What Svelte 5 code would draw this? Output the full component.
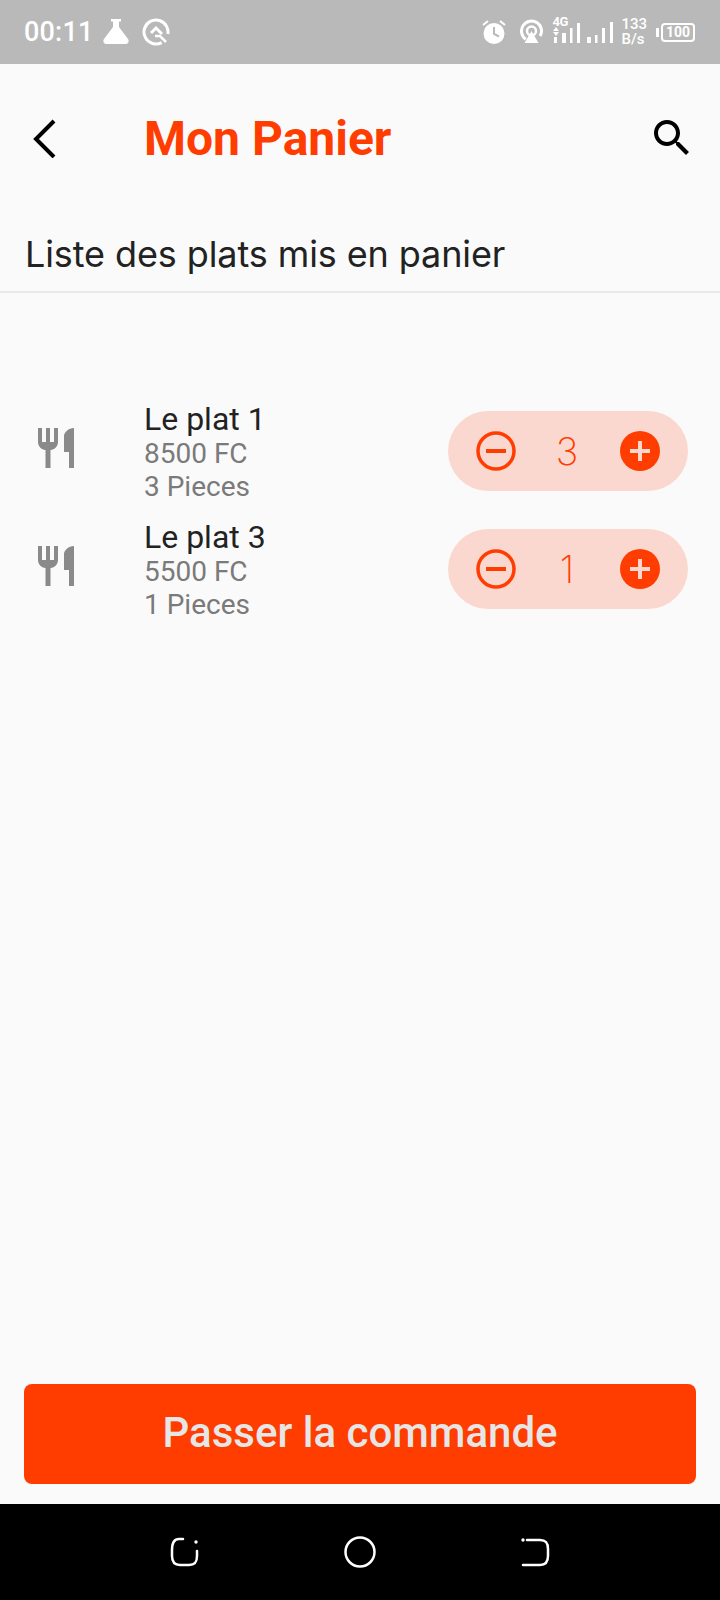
<script lang="ts">
  interface Plat {
    name: string;
    price: string;
    qty: number;
  }

  const plats: Plat[] = [
    { name: "Le plat 1", price: "8500 FC", qty: 3 },
    { name: "Le plat 3", price: "5500 FC", qty: 1 },
  ];
</script>

<div class="screen">
  <div class="statusbar">
    <span class="time">00:11</span>
    <svg class="ic-flask" width="26" height="26" viewBox="0 0 26 26">
      <path d="M8 0h10v2.500h-2V8l9 12c1.500 2.500 0 5-2 5H3c-2 0-3.500-2.500-2-5l9-12V2.500H8z" fill="#fff"/>
    </svg>
    <svg class="ic-q" width="28" height="28" viewBox="0 0 28 28">
      <circle cx="14" cy="14" r="12" fill="none" stroke="#fff" stroke-width="3" stroke-dasharray="64 12" transform="rotate(62 14 14)"/>
      <path d="M9 15l5-5 6 6" fill="none" stroke="#fff" stroke-width="3"/>
      <path d="M13 18h5l6 6" fill="none" stroke="#fff" stroke-width="2.500"/>
    </svg>
    <div class="status-right">
      <svg class="s-alarm" width="24" height="26" viewBox="0 0 24 26">
        <circle cx="12" cy="14.500" r="10.500" fill="#fff"/>
        <path d="M12 8v7l5 2.500" fill="none" stroke="#b9b9b9" stroke-width="2"/>
        <path d="M1 6l5-4M23 6l-5-4" stroke="#fff" stroke-width="2"/>
      </svg>
      <svg class="s-spot" width="23" height="26" viewBox="0 0 23 26">
        <circle cx="11.500" cy="12" r="10" fill="none" stroke="#fff" stroke-width="3" stroke-dasharray="46 17" transform="rotate(125 11.500 12)"/>
        <circle cx="11.500" cy="12" r="4.500" fill="none" stroke="#fff" stroke-width="2.500"/>
        <path d="M11.500 12l7 12h-14z" fill="#fff"/>
      </svg>
      <div class="net">
        <span class="net-label">4G</span>
        <svg width="30" height="30" viewBox="0 0 30 30">
          <path d="M1 14l3-4 3 4zM1 15h6l-3 4z" fill="#fff"/>
          <rect x="2" y="20" width="3" height="6" fill="#fff"/>
          <rect x="10" y="16" width="4" height="10" fill="#fff"/>
          <rect x="18" y="11" width="2.500" height="15" fill="#fff"/>
          <rect x="25" y="6" width="3" height="20" fill="#fff"/>
        </svg>
      </div>
      <svg class="s-signal" width="27" height="30" viewBox="0 0 27 30">
        <rect x="0" y="20" width="4" height="6" fill="#fff"/>
        <rect x="8" y="18" width="2.500" height="8" fill="#fff"/>
        <rect x="15" y="11" width="3" height="15" fill="#fff"/>
        <rect x="23" y="5" width="3" height="21" fill="#fff"/>
      </svg>
      <div class="speed"><span>133</span><span>B/s</span></div>
      <div class="battery-wrap">
        <span class="battery-tip"></span>
        <span class="battery">100</span>
      </div>
    </div>
  </div>

  <header class="topbar">
    <button class="icon-btn back" aria-label="Retour">
      <svg width="28" height="40" viewBox="0 0 28 40">
        <path d="M24 3L6 21l18 18" fill="none" stroke="#000" stroke-width="4"/>
      </svg>
    </button>
    <h1>Mon Panier</h1>
    <button class="icon-btn search" aria-label="Rechercher">
      <svg width="48" height="48" viewBox="0 0 24 24">
        <path d="M15.500 14h-.79l-.28-.27C15.410 12.590 16 11.110 16 9.500 16 5.910 13.090 3 9.500 3S3 5.910 3 9.500 5.910 16 9.500 16c1.610 0 3.090-.59 4.230-1.570l.27.28v.79l5 4.990L20.490 19l-4.990-5zm-6 0C7.010 14 5 11.990 5 9.500S7.010 5 9.500 5 14 7.010 14 9.500 11.990 14 9.500 14z" fill="#000"/>
      </svg>
    </button>
  </header>

  <div class="subtitle">Liste des plats mis en panier</div>

  <div class="list">
    {#each plats as plat}
      <div class="row">
        <svg class="plat-icon" width="48" height="48" viewBox="0 0 24 24">
          <path d="M11 9H9V2H7v7H5V2H3v7c0 2.120 1.660 3.840 3.750 3.970V22h2.500v-9.030C11.340 12.840 13 11.120 13 9V2h-2v7zm5-3v8h2.500v8H21V2c-2.760 0-5 2.240-5 4z" fill="#8a8a8a"/>
        </svg>
        <div class="infos">
          <div class="name">{plat.name}</div>
          <div class="sub">{plat.price}</div>
          <div class="sub">{plat.qty} Pieces</div>
        </div>
        <div class="stepper">
          <svg width="40" height="40" viewBox="0 0 40 40">
            <circle cx="20" cy="20" r="18" fill="none" stroke="#ff3d00" stroke-width="3.500"/>
            <rect x="10" y="18" width="20" height="4" fill="#ff3d00"/>
          </svg>
          <span class="qty">{plat.qty}</span>
          <svg width="40" height="40" viewBox="0 0 40 40">
            <circle cx="20" cy="20" r="20" fill="#ff3d00"/>
            <path d="M10 18h8v-8h4v8h8v4h-8v8h-4v-8h-8z" fill="#fbd8cf"/>
          </svg>
        </div>
      </div>
    {/each}
  </div>

  <div class="footer">
    <button class="order">Passer la commande</button>
  </div>

  <nav class="navbar">
    <svg width="30" height="32" viewBox="0 0 30 32">
      <path d="M13 3H9C4 3 2 7 2 14v6c0 6 3 9 8 9h9c6 0 8-3 8-9v-5" fill="none" stroke="#fff" stroke-width="2.500" stroke-linecap="round"/>
      <circle cx="26" cy="6" r="1.700" fill="#fff"/>
    </svg>
    <svg width="32" height="32" viewBox="0 0 32 32">
      <circle cx="16" cy="16" r="14.500" fill="none" stroke="#fff" stroke-width="2.500"/>
    </svg>
    <svg width="30" height="32" viewBox="0 0 30 32">
      <path d="M7 4h13c6 0 8 3 8 9v7c0 6-3 9-8 9H3" fill="none" stroke="#fff" stroke-width="2.500" stroke-linecap="round"/>
      <circle cx="3" cy="4" r="1.700" fill="#fff"/>
    </svg>
  </nav>
</div>

<style>
  :global(body) {
    margin: 0;
    background: #fafafa;
  }

  .screen {
    width: 720px;
    height: 1600px;
    display: flex;
    flex-direction: column;
    background: #fafafa;
    font-family: Roboto, "Liberation Sans", sans-serif;
    overflow: hidden;
  }

  .statusbar {
    height: 64px;
    flex: none;
    display: flex;
    align-items: center;
    padding: 0 25px 0 24px;
    box-sizing: border-box;
    background: #b9b9b9;
    color: #fff;
  }
  .time {
    font-size: 27px;
    font-weight: 500;
    letter-spacing: 0.2px;
  }
  .ic-flask {
    margin-left: 9px;
  }
  .ic-q {
    margin-left: 13px;
  }
  .status-right {
    margin-left: auto;
    display: flex;
    align-items: center;
  }
  .s-spot {
    margin-left: 14px;
  }
  .net {
    position: relative;
    width: 30px;
    height: 30px;
    margin-left: 9px;
  }
  .net svg {
    display: block;
  }
  .net-label {
    position: absolute;
    left: 0;
    top: -2px;
    font-size: 13px;
    line-height: 13px;
    font-weight: 700;
    letter-spacing: -0.5px;
  }
  .s-signal {
    margin-left: 5px;
  }
  .speed {
    display: flex;
    flex-direction: column;
    margin-left: 7px;
    font-size: 15px;
    line-height: 15px;
    font-weight: 500;
  }
  .battery-wrap {
    display: flex;
    align-items: center;
    gap: 2px;
    margin-left: 9px;
  }
  .battery-tip {
    width: 3px;
    height: 9px;
    background: #fff;
  }
  .battery {
    width: 34px;
    height: 19px;
    box-sizing: border-box;
    border: 2px solid #fff;
    border-radius: 4px;
    font-size: 14px;
    line-height: 15px;
    font-weight: 700;
    text-align: center;
  }

  .topbar {
    height: 148px;
    flex: none;
    display: flex;
    align-items: center;
    box-sizing: border-box;
    padding: 0 24px 0 30px;
  }
  .icon-btn {
    border: 0;
    padding: 0;
    background: none;
    display: flex;
  }
  .back {
    width: 114px;
  }
  h1 {
    margin: 0;
    flex: 1;
    font-size: 48px;
    font-weight: 700;
    color: #ff3d00;
  }

  .subtitle {
    height: 81px;
    flex: none;
    box-sizing: border-box;
    padding: 0 25px;
    border-bottom: 2px solid #e8e8e8;
    font-family: Inter, "Open Sans", sans-serif;
    font-size: 36px;
    font-weight: 400;
    line-height: 84px;
    color: #222;
    letter-spacing: -0.1px;
  }

  .list {
    flex: 1;
    display: flex;
    flex-direction: column;
    padding-top: 99px;
  }
  .row {
    height: 118px;
    display: flex;
    align-items: center;
    padding: 0 32px;
    box-sizing: border-box;
  }
  .plat-icon {
    flex: none;
    margin-right: 64px;
    margin-bottom: 6px;
  }
  .infos {
    flex: 1;
    margin-top: 4px;
  }
  .name {
    font-size: 32px;
    line-height: 32px;
    margin-bottom: 2px;
    color: #222;
  }
  .sub {
    font-size: 28px;
    line-height: 33px;
    color: #7a7a7a;
  }
  .stepper {
    width: 240px;
    height: 80px;
    box-sizing: border-box;
    padding: 0 28px;
    display: flex;
    align-items: center;
    justify-content: space-between;
    border-radius: 40px;
    background: #fbd8cf;
  }
  .qty {
    font-family: Inter, Lato, sans-serif;
    font-size: 38px;
    font-weight: 200;
    color: #ff3d00;
    margin-left: -2px;
  }

  .footer {
    flex: none;
    padding: 0 24px 20px;
  }
  .order {
    width: 100%;
    height: 100px;
    border: 0;
    padding: 0 0 3px;
    border-radius: 8px;
    background: #ff3d00;
    color: #e6e6e6;
    font-family: Roboto, sans-serif;
    font-size: 42px;
    font-weight: 500;
    display: block;
  }

  .navbar {
    height: 96px;
    flex: none;
    display: flex;
    align-items: center;
    background: #000;
    padding: 0 170px;
    justify-content: space-between;
  }
</style>
